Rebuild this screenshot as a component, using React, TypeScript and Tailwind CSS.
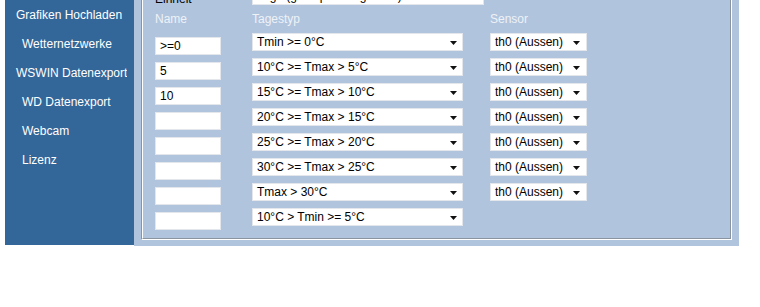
import React from "react";

const rows = [
  { name: ">=0", typ: "Tmin >= 0°C", sensor: true },
  { name: "5", typ: "10°C >= Tmax > 5°C", sensor: true },
  { name: "10", typ: "15°C >= Tmax > 10°C", sensor: true },
  { name: "", typ: "20°C >= Tmax > 15°C", sensor: true },
  { name: "", typ: "25°C >= Tmax > 20°C", sensor: true },
  { name: "", typ: "30°C >= Tmax > 25°C", sensor: true },
  { name: "", typ: "Tmax > 30°C", sensor: true },
  { name: "", typ: "10°C > Tmin >= 5°C", sensor: false },
];

const nav = [
  { label: "Grafiken Hochladen", pad: "pl-[11px]" },
  { label: "Wetternetzwerke", pad: "pl-[17px]" },
  { label: "WSWIN Datenexport", pad: "pl-[11px]" },
  { label: "WD Datenexport", pad: "pl-[17px]" },
  { label: "Webcam", pad: "pl-[17px]" },
  { label: "Lizenz", pad: "pl-[17px]" },
];

function Arrow() {
  return (
    <svg width="7" height="4" viewBox="0 0 7 4" className="mt-[2px] shrink-0">
      <path d="M0 0h7L3.5 4z" fill="#111" />
    </svg>
  );
}

function Select({ text, w, pr }: { text: string; w: string; pr: string }) {
  return (
    <div
      className={`${w} h-[18px] bg-white border border-[#e3e7ec] flex items-center justify-between pl-[4px] ${pr} text-[12px] leading-[14px] text-black whitespace-nowrap`}
    >
      <span>{text}</span>
      <Arrow />
    </div>
  );
}

export default function App() {
  return (
    <div className="w-[760px] h-[307px] overflow-hidden bg-white font-['Liberation_Sans',Arial,sans-serif]">
      <div className="-mt-[20px] ml-[5px] flex items-start w-[734px]">
        <nav className="w-[129px] h-[265px] bg-[#336699] pt-[21px] overflow-hidden">
          <ul className="w-[122px] overflow-hidden">
            {nav.map((n) => (
              <li
                key={n.label}
                className={`h-[29px] leading-[29px] text-[12px] text-white whitespace-nowrap ${n.pad}`}
              >
                {n.label}
              </li>
            ))}
          </ul>
        </nav>
        <main className="w-[605px] h-[266px] bg-[#b0c4de] px-[7px] pb-[6px] flex flex-col">
          <div className="flex-1 border border-t-[#8a94a0] border-l-[#8a94a0] border-r-white border-b-white flex flex-col">
            <div className="flex-1 border border-t-white border-l-white border-r-[#8a94a0] border-b-[#8a94a0] pl-[12px] pt-[5px]">
              <div className="flex items-start">
                <div className="w-[97px] mt-[5px] text-[12px] leading-[14px] text-black">Einheit</div>
                <Select text="Tage (gestapelt dargestellt)" w="w-[232px]" pr="pr-[5px]" />
              </div>
              <div className="mt-[6px] flex h-[14px] text-[12px] leading-[14px] text-[#eef2f7]">
                <div className="w-[97px]">Name</div>
                <div className="w-[238px]">Tagestyp</div>
                <div>Sensor</div>
              </div>
              <div className="mt-[7px] flex flex-col gap-[7px]">
                {rows.map((r, i) => (
                  <div key={i} className="flex h-[18px]">
                    <div className="w-[97px]">
                      <input
                        readOnly
                        value={r.name}
                        className="w-[66px] h-[18px] bg-white border border-[#e3e7ec] pl-[4px] text-[12px] leading-[14px] text-black outline-none"
                      />
                    </div>
                    <div className="w-[238px]">
                      <Select text={r.typ} w="w-[211px]" pr="pr-[5px]" />
                    </div>
                    {r.sensor && <Select text="th0 (Aussen)" w="w-[97px]" pr="pr-[6px]" />}
                  </div>
                ))}
              </div>
            </div>
          </div>
        </main>
      </div>
    </div>
  );
}
